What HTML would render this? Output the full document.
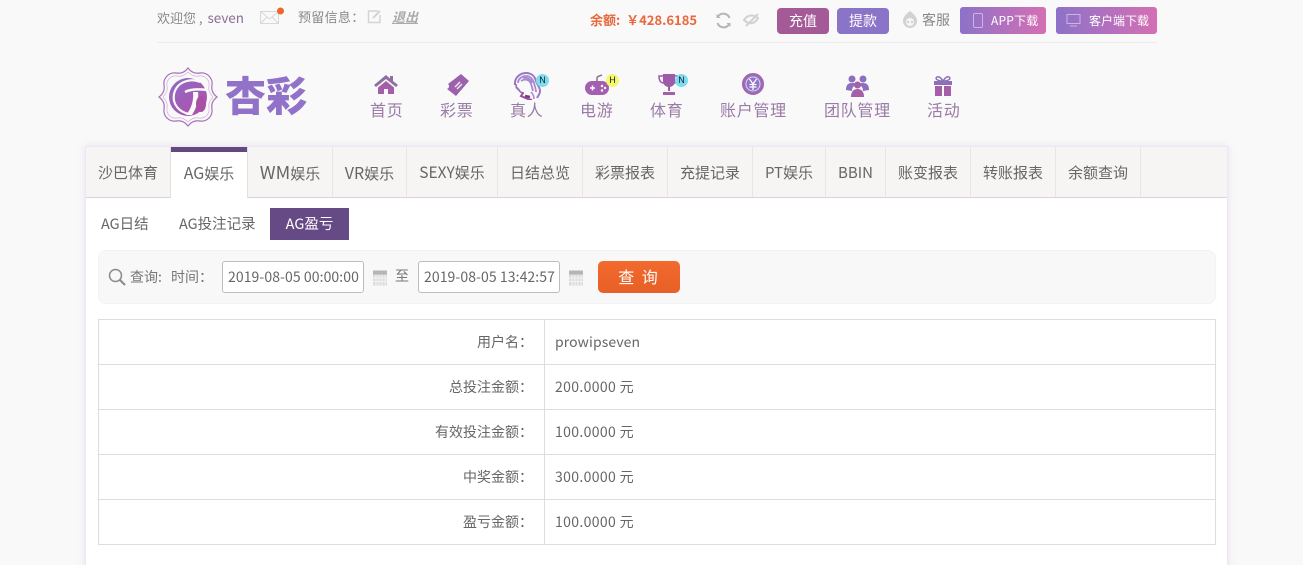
<!DOCTYPE html>
<html lang="zh-CN">
<head>
<meta charset="utf-8">
<title>AG盈亏</title>
<style>
html,body{margin:0;padding:0;width:1303px;height:565px;overflow:hidden;background:#f9f9f9}
body{position:relative;font-family:"Noto Sans CJK SC","Liberation Sans",sans-serif;color:#666}
.a{position:absolute;white-space:nowrap}
.t{font-size:13px;line-height:18px;color:#888}
.btn{position:absolute;top:8px;height:26px;line-height:26px;text-align:center;color:#fff;font-size:14px;border-radius:4px}
.dl{position:absolute;top:7px;height:27px;line-height:27px;color:#fff;font-size:12px;border-radius:3px;background:linear-gradient(90deg,#8d72c8,#d56fb4)}
.nav{position:absolute;top:98px;font-size:16px;line-height:23px;color:#9a7aa6;white-space:nowrap;letter-spacing:.7px}
.ic{position:absolute}
.badge{position:absolute;width:13px;height:13px;border-radius:50%;font-size:9px;line-height:13px;text-align:center;color:#123;font-family:"Liberation Sans",sans-serif}
#panel{position:absolute;left:85px;top:146px;width:1143px;height:430px;background:#fff;border:1px solid #eee6f2;box-sizing:border-box;box-shadow:0 0 8px rgba(160,110,200,.18)}
#tabs{position:absolute;left:86px;top:147px;width:1141px;height:51px;background:#f7f4f4;border-bottom:1px solid #d9d5d7;box-sizing:border-box}
.tab{position:absolute;top:0;height:50px;line-height:51px;font-size:15px;color:#666;text-align:center;border-right:1px solid #e9e5e6;box-sizing:border-box;white-space:nowrap}
.tab.on{background:#fff;height:51px;border-left:1px solid #e2dfe0;border-right:1px solid #e2dfe0}
.tab.on:before{content:"";position:absolute;left:0;right:0;top:0;height:5px;background:#64497f}
.sub{position:absolute;top:208px;height:32px;line-height:32px;font-size:14.500px;color:#666;white-space:nowrap}
#bar{position:absolute;left:98px;top:250px;width:1118px;height:54px;background:#f8f8f8;border:1px solid #f3f3f3;border-radius:8px;box-sizing:border-box}
.inp{position:absolute;top:261px;width:142px;height:32px;box-sizing:border-box;background:#fff;border:1px solid #bdbdbd;border-radius:3px;font-size:14px;line-height:30px;padding-left:5px;color:#666;white-space:nowrap;letter-spacing:.08px}
#qbtn{position:absolute;left:598px;top:261px;width:82px;height:32px;border-radius:5px;background:linear-gradient(180deg,#f26a2c,#e85f27);color:#fff;font-size:16px;line-height:31px;text-align:center;letter-spacing:2px}
table{position:absolute;left:98px;top:319px;width:1118px;height:226px;border-collapse:collapse;table-layout:fixed;font-size:14px;color:#666;background:#fff}
td{border:1px solid #ddd;height:44px;padding:0;box-sizing:border-box}
td.l{width:446px;text-align:right;padding-right:11px;font-size:14px}
td.r{padding-left:10px;letter-spacing:.35px}
</style>
</head>
<body>
<div class="a t" style="left:157px;top:8px">欢迎您 , <span style="color:#8b6f96;margin-left:2px;font-size:13.500px">seven</span></div>
<svg class="ic" style="left:260px;top:7px" width="26" height="18" viewBox="0 0 26 18"><rect x="0.500" y="4.500" width="18" height="12" fill="none" stroke="#d8d8d8"/><path d="M1 5l8.500 7 8.500-7M1 16l6-6M18 16l-6-6" fill="none" stroke="#d8d8d8"/><circle cx="20.500" cy="4" r="3.500" fill="#f0652a"/></svg>
<div class="a t" style="left:298px;top:8px;letter-spacing:.3px">预留信息：</div>
<svg class="ic" style="left:367px;top:9px" width="15" height="15" viewBox="0 0 15 15"><path d="M11 2H1.500v11.500H13V6" fill="none" stroke="#d4d4d4" stroke-width="1.500"/><path d="M6 9l7-7" stroke="#d4d4d4" stroke-width="2"/></svg>
<div class="a t" style="left:392px;top:8px;font-style:italic;font-weight:700;text-decoration:underline;color:#aaa">退出</div>
<div class="a" style="left:157px;top:42px;width:1000px;height:1px;background:#ececec"></div>

<div class="a" style="left:590px;top:11px;font-size:13px;line-height:18px;font-weight:700;color:#e8683c">余额:&nbsp; ￥428.6185</div>
<svg class="ic" style="left:715px;top:12px" width="17" height="17" viewBox="0 0 17 17"><path d="M14.500 6A6.500 6.500 0 0 0 3 4.500M2.500 11A6.500 6.500 0 0 0 14 12.500" fill="none" stroke="#b5b5b5" stroke-width="2"/><path d="M1.500 2v4h4zM15.500 15v-4h-4z" fill="#b5b5b5"/></svg>
<svg class="ic" style="left:743px;top:12px" width="17" height="16" viewBox="0 0 17 16"><path d="M1 8c3-5 9-6 14-2-3 6-9 7-14 2z" fill="none" stroke="#d2d2d2" stroke-width="2"/><path d="M3 14L15 2" stroke="#d2d2d2" stroke-width="2"/></svg>
<div class="btn" style="left:777px;width:52px;top:8px;background:#a55a98">充值</div>
<div class="btn" style="left:837px;width:52px;top:8px;background:#8a74c8">提款</div>
<svg class="ic" style="left:902px;top:11px" width="16" height="18" viewBox="0 0 16 18"><path d="M8 0C4 3 1 6 1 10a7 7 0 0 0 14 0C15 6 12 3 8 0z" fill="#d2d2d2"/><circle cx="8" cy="11" r="4" fill="#f5f5f5"/><circle cx="6" cy="11" r=".8" fill="#aaa"/><circle cx="10" cy="11" r=".8" fill="#aaa"/></svg>
<div class="a" style="left:922px;top:11px;font-size:14px;line-height:18px;color:#888">客服</div>
<div class="dl" style="left:960px;width:86px"><svg class="ic" style="left:12px;top:6px" width="12" height="15" viewBox="0 0 12 15"><rect x="1.500" y="0.500" width="9" height="14" rx="1.500" fill="none" stroke="#c9b6e6"/></svg><span class="a" style="left:31px;top:0;letter-spacing:.2px">APP下载</span></div>
<div class="dl" style="left:1056px;width:101px"><svg class="ic" style="left:10px;top:7px" width="15" height="13" viewBox="0 0 15 13"><rect x="1" y="0.500" width="13" height="9" fill="none" stroke="#c9b6e6"/><path d="M4 12h7" stroke="#c9b6e6"/></svg><span class="a" style="left:33px;top:0">客户端下载</span></div>

<svg class="ic" style="left:157px;top:66px" width="62" height="62" viewBox="0 0 62 62">
<defs><linearGradient id="lg" x1="0" y1="0" x2="1" y2="1"><stop offset="0" stop-color="#8f6bc6"/><stop offset="1" stop-color="#b04fa8"/></linearGradient></defs>
<path d="M31 2C34 6 38 8 43 7C50 6 56 12 55 19C54 24 56 28 60 31C56 34 54 38 55 43C56 50 50 56 43 55C38 54 34 56 31 60C28 56 24 54 19 55C12 56 6 50 7 43C8 38 6 34 2 31C6 28 8 24 7 19C6 12 12 6 19 7C24 8 28 6 31 2Z" fill="none" stroke="#a872b8" stroke-width="1.200"/>
<path d="M31 6C34 9 38 11 42 10C48 9 53 14 52 20C51 24 53 28 56 31C53 34 51 38 52 42C53 48 48 53 42 52C38 51 34 53 31 56C28 53 24 51 20 52C14 53 9 48 10 42C11 38 9 34 6 31C9 28 11 24 10 20C9 14 14 9 20 10C24 11 28 9 31 6Z" fill="none" stroke="#d0afd8" stroke-width=".7"/>
<circle cx="31" cy="31" r="19" fill="url(#lg)"/>
<path d="M43 16C34 12 20 15 17 28C15 38 22 46 32 48" fill="none" stroke="#f9f9f9" stroke-width="2.200"/>
<path d="M28 26C34 23 42 23 50 24" stroke="#f9f9f9" stroke-width="2.500" fill="none"/>
<path d="M36 26h5c1 7-1 15-6 23h-6c5-6 8-14 7-23z" fill="#f9f9f9"/>
<ellipse cx="44" cy="38" rx="5" ry="8" fill="#a84fa6"/>
</svg>
<div class="a" style="left:225px;top:63px;font-weight:900;font-size:41px;line-height:60px;color:#9272c8">杏彩</div>

<svg class="ic" style="left:373px;top:74px" width="26" height="21" viewBox="0 0 26 21"><path d="M13 1L1 11l2 2L13 5l10 8 2-2-5-4V2h-3v2.500z" fill="#8d6fa0"/><path d="M5 13.500L13 7l8 6.500V20h-6v-5h-4v5H5z" fill="#a45fa8"/></svg>
<div class="nav" style="left:370px">首页</div>
<svg class="ic" style="left:445px;top:73px" width="25" height="24" viewBox="0 0 25 24"><path d="M16 1l8 7-13 15-9-7c2-1 3-3 1-5z" fill="#9d62ae"/><path d="M10 14l5-5M12 16l5-5" stroke="#f0e4f2" stroke-width="1.500"/></svg>
<div class="nav" style="left:440px">彩票</div>
<svg class="ic" style="left:513px;top:72px" width="28" height="28" viewBox="0 0 28 28" fill="none">
<path d="M2 13C1 6 7 1 13 1c6 0 9 4 10 8 1 4 4 6 4 10 0 3-2 5-3 7" stroke="#9b78c4" stroke-width="2"/>
<path d="M5 11C5 7 9 4 13 4c4 0 7 3 8 7 1 4 2 6 2 9M8 9c3-2 7-2 9 1 2 3 2 6 3 9M10 6c4-1 8 1 9 5" stroke="#a98ad0" stroke-width="1.800"/>
<path d="M3 12c0 3 1 5 3 6 1 2 3 3 5 3" stroke="#a45fa8" stroke-width="1.500"/>
<path d="M3 15l3 3" stroke="#9b78c4" stroke-width="2"/>
<path d="M10 21l-2 3 7 3 4 1" stroke="#9a4f9c" stroke-width="2"/>
<path d="M12 24l5 1" stroke="#7d3a82" stroke-width="2.500"/>
<path d="M18 20c2 2 3 4 3 7" stroke="#c07ac8" stroke-width="1.500"/>
</svg>
<div class="badge" style="left:536px;top:74px;background:#7fdcef">N</div>
<div class="nav" style="left:510px">真人</div>
<svg class="ic" style="left:584px;top:74px" width="26" height="22" viewBox="0 0 26 22"><path d="M13 7V4c0-2 3-2 5-3" fill="none" stroke="#8d6f90" stroke-width="1.500"/><rect x="1" y="7" width="24" height="14" rx="7" fill="#a55fb0"/><path d="M6 14h5M8.500 11.500v5" stroke="#fff" stroke-width="1.500"/><circle cx="18" cy="12" r="1.200" fill="#fff"/><circle cx="18" cy="16.500" r="1.200" fill="#fff"/><circle cx="21" cy="14" r="1.200" fill="#fff"/></svg>
<div class="badge" style="left:606px;top:74px;background:#f7f76a">H</div>
<div class="nav" style="left:580px">电游</div>
<svg class="ic" style="left:657px;top:73px" width="24" height="23" viewBox="0 0 24 23"><path d="M6 1h12v7c0 4-3 6-6 6s-6-2-6-6z" fill="#9c5ca8"/><path d="M6 3H2c0 5 2 7 5 7M18 3h4c0 5-2 7-5 7" fill="none" stroke="#9c5ca8" stroke-width="1.500"/><path d="M11 13h2v5h-2z" fill="#9c5ca8"/><path d="M6 19h12v3H6z" fill="#a45fa8"/></svg>
<div class="badge" style="left:675px;top:74px;background:#7fdcef">N</div>
<div class="nav" style="left:650px">体育</div>
<svg class="ic" style="left:741px;top:72px" width="24" height="24" viewBox="0 0 24 24"><circle cx="12" cy="12" r="10" fill="#9272c4" stroke="#a465b0" stroke-width="2"/><circle cx="12" cy="12" r="7" fill="none" stroke="#e0d6f0"/><path d="M8.500 7l3.500 5 3.500-5M8.500 12.500h7M8.500 15h7M12 12v6" fill="none" stroke="#fff" stroke-width="1.300"/></svg>
<div class="nav" style="left:720px">账户管理</div>
<svg class="ic" style="left:845px;top:75px" width="25" height="22" viewBox="0 0 25 22"><circle cx="7" cy="4" r="3.500" fill="#8d6fc0"/><circle cx="18" cy="4" r="3.500" fill="#8d6fc0"/><path d="M1 15c0-5 2-7 6-7s3 1 3 2c-2 2-3 3-3 6zM24 15c0-5-2-7-6-7s-3 1-3 2c2 2 3 3 3 6z" fill="#8d6fc0"/><circle cx="12.500" cy="10" r="3.500" fill="#a45fa8"/><path d="M6 22c0-6 3-8 6.500-8s6.500 2 6.500 8z" fill="#a45fa8"/></svg>
<div class="nav" style="left:824px">团队管理</div>
<svg class="ic" style="left:933px;top:76px" width="20" height="20" viewBox="0 0 20 20"><path d="M10 5C8 2 6 0 4 1 2 2 3 5 10 5c7 0 8-3 6-4-2-1-4 1-6 4z" fill="none" stroke="#8d6fb8" stroke-width="1.500"/><rect x="1" y="5" width="18" height="4" fill="#8d6fb8"/><path d="M2 10h7v10H2zM11 10h7v10h-7z" fill="#a45fa8"/></svg>
<div class="nav" style="left:927px">活动</div>

<div id="panel"></div>
<div id="tabs">
<div class="tab" style="left:0;width:85px">沙巴体育</div>
<div class="tab on" style="left:84px;width:78px"><span style="font-size:16px">AG</span>娱乐</div>
<div class="tab" style="left:162px;width:85px"><span style="font-size:18px">WM</span>娱乐</div>
<div class="tab" style="left:247px;width:74px"><span style="font-size:16px">VR</span>娱乐</div>
<div class="tab" style="left:321px;width:91px"><span style="font-size:15.500px">SEXY</span>娱乐</div>
<div class="tab" style="left:412px;width:85px">日结总览</div>
<div class="tab" style="left:497px;width:85px">彩票报表</div>
<div class="tab" style="left:582px;width:85px">充提记录</div>
<div class="tab" style="left:667px;width:73px">PT娱乐</div>
<div class="tab" style="left:740px;width:60px">BBIN</div>
<div class="tab" style="left:800px;width:85px">账变报表</div>
<div class="tab" style="left:885px;width:85px">转账报表</div>
<div class="tab" style="left:970px;width:85px">余额查询</div>
</div>
<div class="sub" style="left:101px">AG日结</div>
<div class="sub" style="left:179px">AG投注记录</div>
<div class="sub" style="left:270px;width:79px;text-align:center;background:#654a85;color:#fff">AG盈亏</div>

<div id="bar"></div>
<svg class="ic" style="left:108px;top:268px" width="18" height="18" viewBox="0 0 18 18"><circle cx="7.500" cy="7.500" r="6" fill="none" stroke="#8a8a8a" stroke-width="1.500"/><path d="M12 12l5 5" stroke="#8a8a8a" stroke-width="2"/></svg>
<div class="a" style="left:130px;top:267px;font-size:14px;line-height:20px;color:#777">查询:</div>
<div class="a" style="left:171px;top:267px;font-size:14px;line-height:20px;color:#777">时间：</div>
<div class="inp" style="left:222px">2019-08-05 00:00:00</div>
<svg class="ic" style="left:372px;top:269px" width="16" height="17" viewBox="0 0 16 17"><rect x="1" y="1.500" width="14" height="15" fill="#dcdcdc"/><rect x="1" y="1.500" width="14" height="4" fill="#b5b5b5"/><path d="M4 6v10M7 6v10M10 6v10M13 6v10M1 9h14M1 12.500h14" stroke="#f3f3f3"/></svg>
<div class="a" style="left:395px;top:266px;font-size:14px;line-height:20px;color:#777">至</div>
<div class="inp" style="left:418px">2019-08-05 13:42:57</div>
<svg class="ic" style="left:568px;top:269px" width="16" height="17" viewBox="0 0 16 17"><rect x="1" y="1.500" width="14" height="15" fill="#dcdcdc"/><rect x="1" y="1.500" width="14" height="4" fill="#b5b5b5"/><path d="M4 6v10M7 6v10M10 6v10M13 6v10M1 9h14M1 12.500h14" stroke="#f3f3f3"/></svg>
<div id="qbtn">查 询</div>

<table>
<tr><td class="l">用户名：</td><td class="r" style="letter-spacing:.1px">prowipseven</td></tr>
<tr><td class="l">总投注金额：</td><td class="r">200.0000 元</td></tr>
<tr><td class="l">有效投注金额：</td><td class="r">100.0000 元</td></tr>
<tr><td class="l">中奖金额：</td><td class="r">300.0000 元</td></tr>
<tr><td class="l">盈亏金额：</td><td class="r">100.0000 元</td></tr>
</table>
</body>
</html>
